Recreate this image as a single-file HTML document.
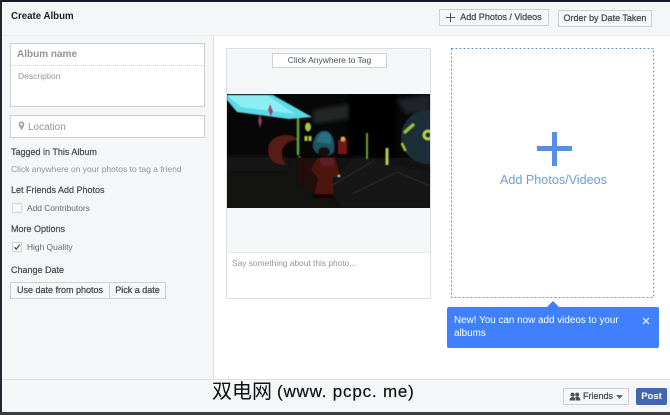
<!DOCTYPE html>
<html><head><meta charset="utf-8"><style>
html,body{margin:0;padding:0}
body{width:670px;height:415px;overflow:hidden;position:relative;background:#fff;font-family:"Liberation Sans",sans-serif}
div,span{position:absolute;box-sizing:border-box;white-space:nowrap}
.b{font-size:9px;color:#4b4f56;-webkit-text-stroke:.25px #4b4f56}
.g{font-size:8.5px;color:#90949c}
.btn{background:#f6f7f9;border:1px solid #ced0d4;font-size:9px;color:#4b4f56;-webkit-text-stroke:.3px #4b4f56;text-align:center}
</style></head><body>
<div style="left:0;top:0;width:670px;height:2px;background:#141c2b"></div>
<div style="left:0;top:0;width:2px;height:415px;background:#23262c"></div>
<div style="left:2px;top:2px;width:668px;height:34px;background:#f5f6f7;border-bottom:1px solid #e9ebee"></div>
<div style="left:2px;top:36px;width:212px;height:343px;background:#f5f6f7;border-right:1px solid #dddfe2"></div>
<div style="left:11px;top:11px;font-size:9.7px;font-weight:bold;color:#1d2129;line-height:11px">Create Album</div>

<div class="btn" style="left:439px;top:9px;width:110px;height:17px;line-height:15px;padding-left:14px">Add Photos / Videos</div>
<div style="left:446px;top:17px;width:9px;height:1.2px;background:#4b4f56"></div>
<div style="left:449.9px;top:13px;width:1.2px;height:9px;background:#4b4f56"></div>
<div class="btn" style="left:558px;top:10px;width:94px;height:17px;line-height:15px">Order by Date Taken</div>

<div style="left:10px;top:43px;width:195px;height:64px;background:#fff;border:1px solid #ccd0d5"></div>
<div style="left:11px;top:65px;width:193px;border-top:1px dotted #ccd0d5"></div>
<div style="left:17px;top:49px;font-size:10px;font-weight:bold;color:#90949c;line-height:12px">Album name</div>
<div style="left:18px;top:71px;font-size:8.5px;color:#90949c;line-height:10px">Description</div>
<div style="left:10px;top:115px;width:195px;height:23px;background:#fff;border:1px solid #ccd0d5"></div>
<svg style="position:absolute;left:18px;top:121px" width="7" height="10" viewBox="0 0 7 10"><path d="M3.5 0.5C1.7 0.5.6 1.8.6 3.3c0 2 2.9 5.9 2.9 5.9s2.9-3.9 2.9-5.9C6.4 1.8 5.3.5 3.5.5zm0 4a1.2 1.2 0 1 1 0-2.4 1.2 1.2 0 0 1 0 2.4z" fill="#a3a6ac"/></svg>
<div style="left:28px;top:122px;font-size:10px;color:#90949c;line-height:12px">Location</div>

<div class="b" style="left:11px;top:147px;line-height:11px">Tagged in This Album</div>
<div class="g" style="left:11px;top:164px;line-height:11px">Click anywhere on your photos to tag a friend</div>
<div class="b" style="left:11px;top:185px;line-height:11px">Let Friends Add Photos</div>
<div style="left:12px;top:203px;width:10px;height:10px;background:#fff;border:1px solid #ced0d4;border-radius:1px"></div>
<div style="left:27px;top:203px;font-size:8.4px;color:#616770;line-height:11px">Add Contributors</div>
<div class="b" style="left:11px;top:224px;line-height:11px">More Options</div>
<div style="left:12px;top:242px;width:10px;height:10px;background:#fff;border:1px solid #ced0d4;border-radius:1px"></div>
<svg style="position:absolute;left:12px;top:242px" width="10" height="10" viewBox="0 0 10 10"><path d="M2.5 5.2L4.2 7.2 7.8 2.6" fill="none" stroke="#4b4f56" stroke-width="1.3"/></svg>
<div style="left:27px;top:242px;font-size:8.4px;color:#616770;line-height:11px">High Quality</div>
<div class="b" style="left:11px;top:265px;line-height:11px">Change Date</div>
<div class="btn" style="left:10px;top:282px;width:100px;height:17px;line-height:15px">Use date from photos</div>
<div class="btn" style="left:109px;top:282px;width:57px;height:17px;line-height:15px">Pick a date</div>

<div style="left:226px;top:48px;width:205px;height:251px;background:#fff;border:1px solid #dddfe2"></div>
<div style="left:227px;top:49px;width:203px;height:204px;background:#f5f6f7;border-bottom:1px solid #e9ebee"></div>
<div style="left:272px;top:53px;width:115px;height:15px;background:#fff;border:1px solid #ced0d4;font-size:8.5px;color:#4b4f56;text-align:center;line-height:13px">Click Anywhere to Tag</div>
<svg style="position:absolute;left:227px;top:94px" width="203" height="114" viewBox="0 0 203 114">
<defs><filter id="bl"><feGaussianBlur stdDeviation="0.6"/></filter><filter id="bl2"><feGaussianBlur stdDeviation="2"/></filter></defs>
<rect width="203" height="114" fill="#070707"/>
<rect y="64" width="203" height="50" fill="#131311"/>
<g filter="url(#bl2)">
<path d="M86 16L121 10V25L86 30Z" fill="#242626"/>
<path d="M170 6L203 0V19L178 20Z" fill="#222429"/>
<path d="M0 62H60V76H0Z" fill="#161716"/>
<path d="M128 62L203 78V114H115L100 92Z" fill="#191916"/>
<rect x="121" y="0" width="48" height="62" fill="#030405"/>
</g>
<g filter="url(#bl)">
<path d="M0 1H46L85 23 62 25 10 18 0 6Z" fill="#58dbe6"/>
<path d="M0 1H40L68 20 14 13Z" fill="#8ceef2"/>
<path d="M43 10L46 17 44 23 41 16Z" fill="#9a3f74"/>
<path d="M33 20L35 27 33 34 31 27Z" fill="#8c3c6c"/>
<path d="M41 56C41 46 50 41 60 41 66 41 70 44 70 46 62 46 55 52 55 60 55 66 58 70 60 71 48 71 41 66 41 56Z" fill="#561a12"/>
<rect x="69.8" y="24" width="2.4" height="37" fill="#68a82c"/>
<ellipse cx="81" cy="33" rx="3" ry="4.5" fill="#a8c438"/>
<rect x="77.5" y="42" width="3" height="5" fill="#aecb3a"/><rect x="81.5" y="42" width="3" height="5" fill="#aecb3a"/>
<circle cx="72" cy="64" r="1.7" fill="#e6eec0"/>
<path d="M70 62L95 70 104 108 70 90Z" fill="#220a09"/>
<path d="M86 54C85 44 92 36 97 37 104 36 109 46 107 58 100 66 90 62 86 54Z" fill="#1c5560"/>
<path d="M90 48C90 42 95 37 98 38 103 38 105 44 104 50Z" fill="#27707f"/>
<ellipse cx="97" cy="58" rx="6" ry="5" fill="#120d10"/>
<path d="M90 64L108 63 113 82 106 84 106 100 88 100 91 84 84 76Z" fill="#4e130e"/>
<path d="M93 64H106L107 72H94Z" fill="#5e1a2b"/>
<path d="M88 100H104L108 104H84Z" fill="#160605"/>
<circle cx="112" cy="82" r="1.4" fill="#d0a898"/>
<rect x="111" y="46" width="9" height="14" fill="#741914"/>
<circle cx="116" cy="45" r="2.5" fill="#e2a058"/>
<rect x="139" y="39" width="2" height="26" fill="#6aa030"/>
<rect x="158.5" y="54" width="3" height="17" fill="#b0cb50"/>
<circle cx="201" cy="43" r="27" fill="#1d2f38"/>
<path d="M178 38L186 31" stroke="#98c63e" stroke-width="3" stroke-linecap="round"/>
<path d="M175 50L178 56" stroke="#98c63e" stroke-width="2.5" stroke-linecap="round"/>
<circle cx="201" cy="41" r="4" fill="none" stroke="#b9d64a" stroke-width="2.6"/>
<path d="M104 92L148 66M125 100L170 78 203 92" stroke="#30312e" stroke-width="1" fill="none"/>
</g>
</svg>
<div style="left:232px;top:258px;font-size:8.4px;color:#90949c;line-height:11px">Say something about this photo...</div>

<svg style="position:absolute;left:450px;top:47px" width="205" height="252"><rect x="1.5" y="1.5" width="202" height="249" fill="none" stroke="#5b9bd5" stroke-width="1" stroke-dasharray="2 2"/></svg>
<div style="left:537px;top:146px;width:35px;height:5px;background:#5890e0"></div>
<div style="left:552px;top:132px;width:5px;height:34px;background:#5890e0"></div>
<div style="left:500px;top:173px;font-size:12.6px;color:#6a9fd8;line-height:15px">Add Photos/Videos</div>

<div style="left:447px;top:307px;width:212px;height:41px;background:#4080ff;border-radius:2px"></div>
<svg style="position:absolute;left:546px;top:301px" width="14" height="7"><path d="M0 7L7 0 14 7Z" fill="#4080ff"/></svg>
<div style="left:454px;top:314px;width:180px;font-size:9.9px;color:#fff;line-height:13px;white-space:normal">New! You can now add videos to your albums</div>
<svg style="position:absolute;left:642px;top:317px" width="8" height="8"><path d="M1 1L7 7M7 1L1 7" stroke="#dbe7ff" stroke-width="1.4"/></svg>

<div style="left:2px;top:379px;width:668px;height:33px;background:#f5f6f7;border-top:1px solid #dddfe2"></div>
<div style="left:0;top:412px;width:670px;height:3px;background:#3a3c40"></div>
<div style="left:212px;top:381px;font-size:20px;color:#111;line-height:22px;font-family:'Liberation Sans','Noto Sans CJK SC',sans-serif">双电网</div>
<div style="left:277px;top:381px;font-size:17px;color:#111;line-height:22px;letter-spacing:.8px;-webkit-text-stroke:.2px #111">(www. pcpc. me)</div>
<div class="btn" style="left:563px;top:388px;width:66px;height:17px;line-height:15px;padding-left:4px;font-size:9px">Friends</div>
<svg style="position:absolute;left:569px;top:392px" width="12" height="9" viewBox="0 0 12 9"><circle cx="3.6" cy="2.6" r="2" fill="#4b4f56"/><circle cx="8.2" cy="2.6" r="2" fill="#4b4f56"/><path d="M0.5 8.5C0.5 6 2 5 3.6 5S6.5 6 6.5 8.5ZM7 8.5C7 7 6.8 6 6 5.2 6.6 5 7.4 4.8 8.2 4.8 10 4.8 11.5 6 11.5 8.5Z" fill="#4b4f56"/></svg>
<svg style="position:absolute;left:616px;top:395px" width="7" height="4"><path d="M0 0H7L3.5 4Z" fill="#606770"/></svg>
<div style="left:636px;top:388px;width:31px;height:17px;background:#4267b2;border-radius:2px;color:#fff;font-size:9.5px;font-weight:bold;text-align:center;line-height:17px">Post</div>
</body></html>
